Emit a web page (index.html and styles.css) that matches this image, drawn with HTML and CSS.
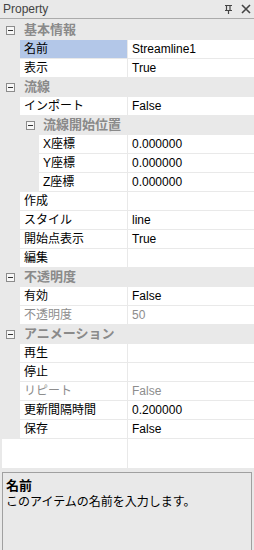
FILE: index.html
```html
<!DOCTYPE html>
<html lang="ja">
<head>
  <meta charset="UTF-8">
  <meta name="viewport" content="width=device-width, initial-scale=1.0">
  <title>Property</title>
  <link rel="stylesheet" href="styles.css">
</head>
<body>
  <div class="titlebar">
    <span class="title">Property</span>
    <span class="tools">
      <svg class="pin" width="9" height="10" viewBox="0 0 9 10">
        <path d="M1 1.5h7M2.5 1.5v5M6 1.5v5M1 6.5h7M4.5 6.5v3.5" stroke="#444" stroke-width="1.2" fill="none"/>
      </svg>
      <svg class="close" width="10" height="10" viewBox="0 0 10 10">
        <path d="M1 1l8 8M9 1l-8 8" stroke="#444" stroke-width="1.6" fill="none"/>
      </svg>
    </span>
  </div>

  <div class="grid">
    <div class="row cat"><span class="toggle"></span><span class="label">基本情報</span></div>
    <div class="row selected"><div class="name">名前</div><div class="value">Streamline1</div></div>
    <div class="row"><div class="name">表示</div><div class="value">True</div></div>

    <div class="row cat"><span class="toggle"></span><span class="label">流線</span></div>
    <div class="row"><div class="name">インポート</div><div class="value">False</div></div>
    <div class="row cat sub"><span class="toggle"></span><span class="label">流線開始位置</span></div>
    <div class="row nested"><div class="name">X座標</div><div class="value">0.000000</div></div>
    <div class="row nested"><div class="name">Y座標</div><div class="value">0.000000</div></div>
    <div class="row nested"><div class="name">Z座標</div><div class="value">0.000000</div></div>
    <div class="row"><div class="name">作成</div><div class="value"></div></div>
    <div class="row"><div class="name">スタイル</div><div class="value">line</div></div>
    <div class="row"><div class="name">開始点表示</div><div class="value">True</div></div>
    <div class="row"><div class="name">編集</div><div class="value"></div></div>

    <div class="row cat"><span class="toggle"></span><span class="label">不透明度</span></div>
    <div class="row"><div class="name">有効</div><div class="value">False</div></div>
    <div class="row disabled"><div class="name">不透明度</div><div class="value">50</div></div>

    <div class="row cat"><span class="toggle"></span><span class="label">アニメーション</span></div>
    <div class="row"><div class="name">再生</div><div class="value"></div></div>
    <div class="row"><div class="name">停止</div><div class="value"></div></div>
    <div class="row disabled"><div class="name">リピート</div><div class="value">False</div></div>
    <div class="row"><div class="name">更新間隔時間</div><div class="value">0.200000</div></div>
    <div class="row"><div class="name">保存</div><div class="value">False</div></div>

    <div class="empty"><div class="name"></div><div class="value"></div></div>
  </div>

  <div class="help">
    <div class="help-title">名前</div>
    <div class="help-text">このアイテムの名前を入力します。</div>
  </div>
</body>
</html>
```

FILE: styles.css
```css
body {
  margin: 0;
  background-color: #e9e9e9;
  font-family: "Liberation Sans", "Noto Sans CJK JP", sans-serif;
  font-size: 12px;
  color: #000;
  overflow: hidden;
}

.titlebar {
  height: 18px;
  line-height: 18px;
  border-bottom: 1px solid #ababab;
  display: flex;
  justify-content: space-between;
  padding-left: 3px;
  color: #444;
}

.tools {
  display: flex;
  align-items: center;
  gap: 8px;
  padding-right: 3px;
}

.grid {
  margin-top: 2px;
}

.row {
  display: flex;
  height: 18px;
  line-height: 18px;
  border-bottom: 1px solid #e9e9e9;
}

.name {
  margin-left: 20px;
  width: 103px;
  padding-left: 4px;
  background-color: #fff;
  border-right: 1px solid #e9e9e9;
  white-space: nowrap;
}

.value {
  flex: 1;
  padding-left: 4px;
  background-color: #fff;
}

.row.selected .name {
  background-color: #b3c7e8;
}

.row.nested .name {
  margin-left: 39px;
  width: 84px;
}

.row.disabled .name,
.row.disabled .value {
  color: #8d8d8d;
}

.row.cat {
  align-items: center;
  font-size: 13px;
  font-weight: bold;
  color: #8a8a8a;
}

.toggle {
  position: relative;
  box-sizing: border-box;
  width: 9px;
  height: 9px;
  margin-left: 6px;
  margin-right: 9px;
  border: 1px solid #8c8c8c;
  background-color: #f7f7f7;
}

.toggle::after {
  content: "";
  position: absolute;
  left: 1px;
  top: 3px;
  width: 5px;
  height: 1px;
  background-color: #333;
}

.row.sub .toggle {
  margin-left: 26px;
  margin-right: 8px;
}

.empty {
  display: flex;
  height: 29px;
  background-color: #fff;
  margin-left: 2px;
}

.empty .name {
  margin-left: 0;
  width: 121px;
}

.help {
  margin: 4px 2px 0;
  height: 100px;
  border: 1px solid #a0a0a0;
  padding: 5px 3px 0;
  background-color: #e9e9e9;
}

.help-title {
  font-size: 13px;
  font-weight: bold;
  line-height: 16px;
}

.help-text {
  line-height: 16px;
}
```
